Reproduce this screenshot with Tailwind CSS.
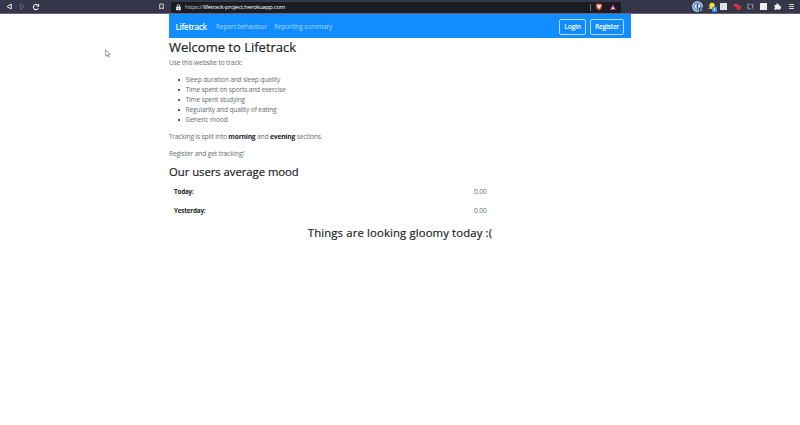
<!DOCTYPE html>
<html lang="en">
<head>
<meta charset="utf-8">
<title>Lifetrack</title>
<script src="https://cdn.jsdelivr.net/npm/@tailwindcss/browser@4"></script>
</head>
<body class="h-[425px] overflow-hidden bg-white font-['Open_Sans','Noto_Sans',sans-serif] text-[6.67px] leading-[10px] tracking-[-0.16px] text-[#6a6d70] whitespace-nowrap">
<header class="flex h-[14px] items-center border-b border-[#65647b] bg-[#35364a] text-white">
  <div class="flex w-[171px] items-center pl-[6px]">
    <svg class="size-[7px]" viewBox="0 0 7 7" fill="none" stroke="#eee" stroke-width="1"><path d="M5.2 1v5L1 3.5z"/></svg>
    <svg class="ml-[6px] size-[7px]" viewBox="0 0 7 7" fill="none" stroke="#6b6c7b" stroke-width=".9"><path d="M1.5 1v5l4-2.500z"/></svg>
    <svg class="ml-[6px] size-[8px]" viewBox="0 0 8 8" fill="none" stroke="#eee" stroke-width="1.100"><path d="M6.200 5.300A2.600 2.600 0 1 1 5.600 2"/><path d="M4.600 3.200h2V1"/></svg>
    <svg class="ml-[118px] size-[7px]" viewBox="0 0 7 7" fill="none" stroke="#ddd" stroke-width=".9"><path d="M1.700 1h3.600v5L3.500 4.900 1.700 6z"/></svg>
  </div>
  <div class="mt-px flex h-[11px] w-[450px] items-center rounded-[2px] bg-[#191b25] pl-[4px]">
    <svg class="size-[7px]" viewBox="0 0 7 7"><path d="M2.200 3V2a1.300 1.300 0 0 1 2.600 0v1" fill="none" stroke="#eee" stroke-width=".9"/><rect x="1.200" y="2.800" width="4.600" height="3.500" rx=".6" fill="#eee"/><path d="M3.500 4v1" stroke="#333" stroke-width=".8"/></svg>
    <span class="ml-[3px] w-[101px] text-[6px] font-medium tracking-[-0.26px]"><span class="text-[#ccc]">https://</span>lifetrack-project.herokuapp.com</span>
    <span class="ml-[304px] h-[7px] w-px bg-[#777]"></span>
    <svg class="ml-[4px] size-[8px] shrink-0" viewBox="0 0 8 8"><path d="M2 .5h4l1.300 1.200-.7 3.800L4 7.600 1.400 5.500.7 1.700z" fill="#ee5130"/><path d="M2 2h4L5 4.700l-1 1.100L3 4.700z" fill="#fff"/></svg>
    <svg class="ml-[6px] size-[8px] shrink-0" viewBox="0 0 8 8"><path d="M4 1 .7 7H4z" fill="#d8344b"/><path d="M4 1l3.300 6H4z" fill="#8b3270"/><path d="M4 3.500 2.500 6h3z" fill="#fff"/></svg>
  </div>
  <div class="flex items-center pl-[71px]">
    <svg class="size-[11px]" viewBox="0 0 11 11"><circle cx="5.500" cy="5.500" r="5.300" fill="#e9edf4"/><circle cx="5.500" cy="5.500" r="3.600" fill="none" stroke="#2877cd" stroke-width="1.300"/><path d="M5.500 3v5" stroke="#27476f" stroke-width="1.500"/><rect x="7" y="6.500" width="4" height="4.500" rx=".7" fill="#314263"/><path d="M9 7.500v2.500" stroke="#fff" stroke-width=".8"/></svg>
    <svg class="ml-[5px] size-[10px]" viewBox="0 0 10 10"><circle cx="4" cy="3.500" r="2.700" fill="#f7dc2e"/><path d="M0 6.500 4 4l2 2-2 1z" fill="#f7dc2e"/><rect x="4" y="5" width="5" height="5" rx=".7" fill="#3b91ee"/><path d="M6.500 6.300v2.400" stroke="#fff"/></svg>
    <svg class="ml-[2px] size-[7px]" viewBox="0 0 7 7"><rect width="7" height="7" rx=".5" fill="#e6e6e8"/><path d="M2.500 2v3h2" fill="none" stroke="#c4c4c8" stroke-width=".6"/></svg>
    <svg class="ml-[6px] h-[8px] w-[9px]" viewBox="0 0 9 8"><path d="M.5 1.500 3 .8l3 1.500 2.300 1.500L7.800 6 6 6.900 4 6.500 3 4 1 3.500z" fill="#dc303f"/><path d="m5 4 1.500 1.200" stroke="#8e2537" stroke-width=".7"/></svg>
    <svg class="ml-[5px] size-[7px]" viewBox="0 0 7 7" fill="none" stroke="#a5a6af"><path d="M3 1H1.600q-.7 0-.7 1v3q0 1 .7 1H3M4 1.500h1.700v4M4 5.500v.8"/></svg>
    <svg class="ml-[6px] size-[7px]" viewBox="0 0 7 7"><rect width="7" height="7" rx=".5" fill="#eee"/><path d="m4 5.500 1.500-1.500" stroke="#bbb" stroke-width=".7"/></svg>
    <svg class="ml-[7px] size-[7px]" viewBox="0 0 7 7" fill="#eee"><path d="M.5 2h1.800a1.100 1.100 0 1 1 2 0h1.500v1.600a1.100 1.100 0 1 1 0 1.800v1.400H4.300a.9.900 0 0 0-1.800 0h-2V5a.9.900 0 0 0 0-1.600z"/></svg>
    <svg class="ml-[7px] size-[7px]" viewBox="0 0 7 7" stroke="#d5d5da" stroke-width="1"><path d="M1 1.500h5M1 3.500h5M1 5.500h5"/></svg>
  </div>
</header>
<main class="ml-[169px] w-[462px]">
  <nav class="flex h-6 items-center bg-[#118dff] pl-[6.500px] pr-[7px] pt-px text-[#a4d3ff]">
    <a class="w-[40.500px] text-[8px] font-semibold tracking-[-0.3px] text-white">Lifetrack</a>
    <a class="w-[58px] tracking-[-0.2px]">Report behaviour</a>
    <a class="tracking-[-0.2px]">Reporting summary</a>
    <a class="ml-auto flex h-4 w-[27px] items-center justify-center rounded-[2px] border border-[#b5dcff] font-semibold tracking-[-0.2px] text-white">Login</a>
    <a class="ml-[4px] flex h-4 w-[34px] items-center justify-center rounded-[2px] border border-[#b5dcff] font-semibold tracking-[-0.25px] text-white">Register</a>
  </nav>
  <h1 class="mt-px text-[13px] leading-[16px] font-medium tracking-[0px] text-[#212529] [-webkit-text-stroke:0.2px_#212529]">Welcome to Lifetrack</h1>
  <p class="mt-[3px]">Use this website to track:</p>
  <ul class="mt-[7px] pl-[8px]">
    <li class="flex items-center"><span class="mr-[5.500px] ml-[0.500px] size-[2.500px] rounded-full bg-[#212529]"></span>Sleep duration and sleep quality</li>
    <li class="flex items-center tracking-[-0.19px]"><span class="mr-[5.500px] ml-[0.500px] size-[2.500px] rounded-full bg-[#212529]"></span>Time spent on sports and exercise</li>
    <li class="flex items-center"><span class="mr-[5.500px] ml-[0.500px] size-[2.500px] rounded-full bg-[#212529]"></span>Time spent studying</li>
    <li class="flex items-center"><span class="mr-[5.500px] ml-[0.500px] size-[2.500px] rounded-full bg-[#212529]"></span>Regularity and quality of eating</li>
    <li class="flex items-center"><span class="mr-[5.500px] ml-[0.500px] size-[2.500px] rounded-full bg-[#212529]"></span>Generic mood</li>
  </ul>
  <p class="mt-[7px]">Tracking is split into <b class="text-[#212529]">morning</b> and <b class="text-[#212529]">evening</b> sections.</p>
  <p class="mt-[7px] tracking-[-0.13px]">Register and get tracking!</p>
  <h2 class="mt-[6px] text-[11.300px] leading-[14px] font-medium tracking-[-0.03px] text-[#212529] [-webkit-text-stroke:0.2px_#212529]">Our users average mood</h2>
  <div class="mt-[8px] grid grid-cols-[300px_1fr] gap-y-[9px] pl-[5px]">
    <b class="text-[6.300px] tracking-[-0.18px] text-[#212529]">Today:</b><span>0.00</span>
    <b class="text-[6.300px] tracking-[-0.18px] text-[#212529]">Yesterday:</b><span>0.00</span>
  </div>
  <h3 class="mt-[10px] text-center text-[11.300px] leading-[14px] font-medium tracking-[0.15px] text-[#212529] [-webkit-text-stroke:0.2px_#212529]">Things are looking gloomy today :(</h3>
</main>
<svg class="absolute left-[105px] top-[49px] h-[9px] w-[6px]" viewBox="0 0 6 9" fill="#fff" stroke="#777" stroke-width=".7"><path d="M.7.800v6.500l1.500-1.400 1 2.300 1-.5-1-2.100h2z"/></svg>
</body>
</html>
